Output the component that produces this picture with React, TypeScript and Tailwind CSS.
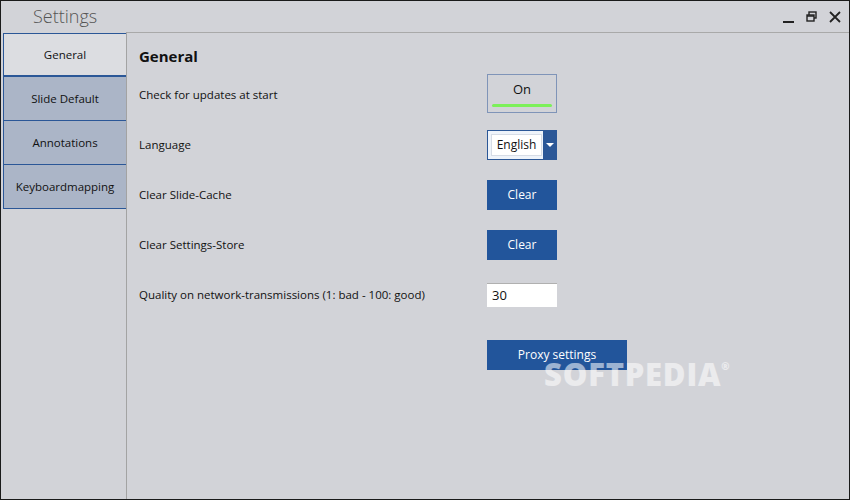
import React from "react";

const tabs = ["General", "Slide Default", "Annotations", "Keyboardmapping"];

const rows = [
  { label: "Check for updates at start", kind: "toggle" },
  { label: "Language", kind: "select" },
  { label: "Clear Slide-Cache", kind: "clear" },
  { label: "Clear Settings-Store", kind: "clear" },
  { label: "Quality on network-transmissions (1: bad - 100: good)", kind: "input" },
];

const Control = ({ kind }: { kind: string }) => {
  if (kind === "toggle") {
    return (
      <div className="w-[70px] h-[39px] -mt-[3px] border border-[#7f94b8] flex flex-col items-center pt-[5px]">
        <span className="text-[13px] text-[#111]">On</span>
        <div className="mt-[4px] w-[60px] h-[3px] rounded-full bg-[#7cf05a]" />
      </div>
    );
  }
  if (kind === "select") {
    return (
      <div className="w-[70px] h-[30px] border border-[#2b5797] bg-[#eef3fa] flex items-center">
        <div className="ml-[3px] w-[51px] h-[22px] bg-white border border-[#d6dce6] flex items-center justify-center text-[12px] text-[#111]">
          English
        </div>
        <div className="ml-auto w-[13px] h-full bg-[#2b5797] flex items-center justify-center">
          <div className="w-0 h-0 border-l-[4px] border-r-[4px] border-t-[4px] border-l-transparent border-r-transparent border-t-white" />
        </div>
      </div>
    );
  }
  if (kind === "clear") {
    return (
      <div className="w-[70px] h-[30px] bg-[#22559b] text-white text-[12px] flex items-center justify-center">
        Clear
      </div>
    );
  }
  return (
    <div className="w-[70px] h-[24px] bg-white border-t border-[#b0b0b0] flex items-center pl-[5px] text-[13px] text-[#111]">
      30
    </div>
  );
};

export default function App() {
  return (
    <div
      className="relative w-[850px] h-[500px] bg-[#d2d3d8] border border-[#1a1a1a] flex flex-col overflow-hidden"
      style={{ fontFamily: '"Open Sans", "Noto Sans", sans-serif' }}
    >
      <div className="h-[31px] flex items-center pl-[32px] pr-[8px]">
        <span className="text-[18px] text-[#555] font-light">Settings</span>
        <div className="ml-auto flex items-center gap-[12px] text-[#111]">
          <div className="w-[11px] h-[2px] bg-[#222] mt-[10px]" />
          <svg width="11" height="11" viewBox="0 0 11 11">
            <rect x="3" y="1" width="7" height="6" fill="none" stroke="#222" strokeWidth="1.4" />
            <rect x="1" y="4" width="7" height="6" fill="#d2d3d8" stroke="#222" strokeWidth="1.4" />
            <line x1="1" y1="5" x2="8" y2="5" stroke="#222" strokeWidth="1.5" />
          </svg>
          <svg width="12" height="12" viewBox="0 0 12 12">
            <path d="M1 1L11 11M11 1L1 11" stroke="#222" strokeWidth="1.8" />
          </svg>
        </div>
      </div>
      <div className="flex flex-1">
        <div className="w-[126px] pl-[2px] pt-[1px] border-r border-[#a3a3a3] flex flex-col">
          {tabs.map((t, i) => (
            <div
              key={t}
              className={`h-[44px] flex items-center justify-center text-[11.5px] text-[#111] border-[#2b5797] ${
                i === 0
                  ? "bg-[#dcdde1] border-t border-l border-b-2"
                  : "bg-[#abb5c7] border-l border-b"
              }`}
            >
              {t}
            </div>
          ))}
        </div>
        <div className="flex-1 border-t border-[#a9a9a9] pl-[12px] pt-[12px]">
          <h2 className="text-[15px] font-bold text-[#111] h-[25px]">General</h2>
          <div className="flex flex-col">
            {rows.map((r, i) => (
              <div key={i} className="h-[50px] flex items-center">
                <span className="w-[348px] text-[11.5px] text-[#111]">{r.label}</span>
                <Control kind={r.kind} />
              </div>
            ))}
            <div className="h-[70px] flex items-center pl-[348px]">
              <div className="w-[140px] h-[30px] bg-[#22559b] text-white text-[12px] flex items-center justify-center">
                Proxy settings
              </div>
            </div>
          </div>
        </div>
      </div>
      <div className="absolute left-[543px] top-[350px] text-[31px] font-extrabold text-white/55 tracking-wide">
        SOFTPEDIA<sup className="text-[10px] align-super">®</sup>
      </div>
    </div>
  );
}
